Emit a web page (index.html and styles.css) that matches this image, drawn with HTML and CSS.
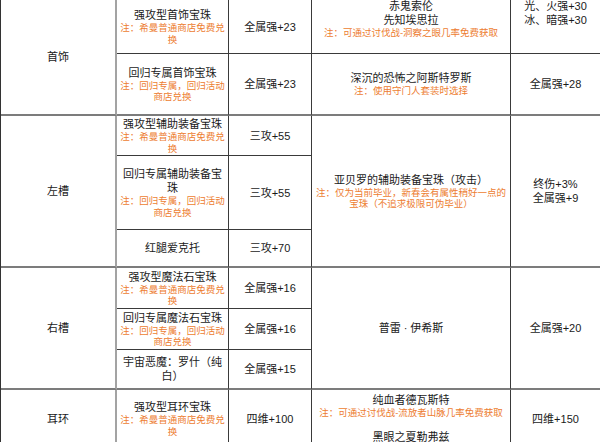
FILE: index.html
```html
<!DOCTYPE html>
<html lang="zh-CN">
<head>
<meta charset="utf-8">
<title>宝珠</title>
<link rel="stylesheet" href="styles.css">
</head>
<body>
<div class="sheet">
  <!-- 首饰 -->
  <div class="cell c1 span2 gend">首饰</div>
  <div class="cell c2"><div class="m">强攻型首饰宝珠</div><div class="n">注：希曼普通商店免费兑换</div></div>
  <div class="cell c3">全属强+23</div>
  <div class="cell c4 top"><div class="lift"><div class="m">赤鬼索伦</div><div class="m">先知埃思拉</div><div class="n">注：可通过讨伐战-洞察之眼几率免费获取</div></div></div>
  <div class="cell c5 top"><div class="lift"><div class="m">光、火强+30</div><div class="m">冰、暗强+30</div></div></div>

  <div class="cell c2 gend"><div class="m">回归专属首饰宝珠</div><div class="n">注：回归专属，回归活动商店兑换</div></div>
  <div class="cell c3 gend">全属强+23</div>
  <div class="cell c4 gend"><div class="m">深沉的恐怖之阿斯特罗斯</div><div class="n">注：使用守门人套装时选择</div></div>
  <div class="cell c5 gend">全属强+28</div>

  <!-- 左槽 -->
  <div class="cell c1 span3 gend">左槽</div>
  <div class="cell c2"><div class="m">强攻型辅助装备宝珠</div><div class="n">注：希曼普通商店免费兑换</div></div>
  <div class="cell c3">三攻+55</div>
  <div class="cell c4 span3 gend"><div class="m">亚贝罗的辅助装备宝珠（攻击）</div><div class="n">注：仅为当前毕业，新春会有属性稍好一点的宝珠（不追求极限可伪毕业）</div></div>
  <div class="cell c5 span3 gend"><div class="m">终伤+3%</div><div class="m">全属强+9</div></div>

  <div class="cell c2"><div class="m">回归专属辅助装备宝珠</div><div class="n">注：回归专属，回归活动商店兑换</div></div>
  <div class="cell c3">三攻+55</div>

  <div class="cell c2 gend"><div class="m">红腿爱克托</div></div>
  <div class="cell c3 gend">三攻+70</div>

  <!-- 右槽 -->
  <div class="cell c1 span3 gend">右槽</div>
  <div class="cell c2"><div class="m">强攻型魔法石宝珠</div><div class="n">注：希曼普通商店免费兑换</div></div>
  <div class="cell c3">全属强+16</div>
  <div class="cell c4 span3 gend"><div class="m">普雷<span class="dot">·</span>伊希斯</div></div>
  <div class="cell c5 span3 gend">全属强+20</div>

  <div class="cell c2"><div class="m">回归专属魔法石宝珠</div><div class="n">注：回归专属，回归活动商店兑换</div></div>
  <div class="cell c3">全属强+16</div>

  <div class="cell c2 gend"><div class="m">宇宙恶魔：罗什（纯白）</div></div>
  <div class="cell c3 gend">全属强+15</div>

  <!-- 耳环 -->
  <div class="cell c1">耳环</div>
  <div class="cell c2"><div class="m">强攻型耳环宝珠</div><div class="n">注：希曼普通商店免费兑换</div></div>
  <div class="cell c3">四维+100</div>
  <div class="cell c4 top ear"><div class="m">纯血者德瓦斯特</div><div class="n">注：可通过讨伐战-流放者山脉几率免费获取</div><div class="m gap">黑眼之夏勒弗兹</div></div>
  <div class="cell c5">四维+150</div>
</div>
</body>
</html>
```

FILE: styles.css
```css
html, body {
  margin: 0;
  padding: 0;
  background: #ffffff;
  overflow: hidden;
}

body {
  font-family: "Liberation Sans", "Noto Sans CJK SC", sans-serif;
  color: #1a1a1a;
  font-size: 11px;
  line-height: 14px;
}

.sheet {
  display: grid;
  width: 601px;
  box-sizing: border-box;
  border-left: 1px solid #333333;
  grid-template-columns: 116px 112px 83px 199px 90px;
  grid-template-rows: 54px 62px 40px 74px 38px 41px 41px 40px 58px;
}

.cell {
  box-sizing: border-box;
  display: flex;
  flex-direction: column;
  justify-content: center;
  align-items: center;
  text-align: center;
  padding: 0 2px;
  border-right: 1px solid #3a3a3a;
  border-bottom: 1px solid #3a3a3a;
  overflow: visible;
  min-width: 0;
}

.c1 {
  border-right: 2px solid #a3a3a3;
}

.span2 { grid-row: span 2; }
.span3 { grid-row: span 3; }

.gend {
  border-bottom: 2px solid #7c7c7c;
}

.top {
  justify-content: flex-start;
}

.lift {
  margin-top: -1px;
}

.ear {
  padding-top: 3px;
}

.m {
  font-size: 11px;
  line-height: 14px;
}

.n {
  font-size: 9.5px;
  line-height: 11.5px;
  color: #ed7d31;
}

.gap {
  margin-top: 11px;
}

.dot {
  margin: 0 3px;
}
```
